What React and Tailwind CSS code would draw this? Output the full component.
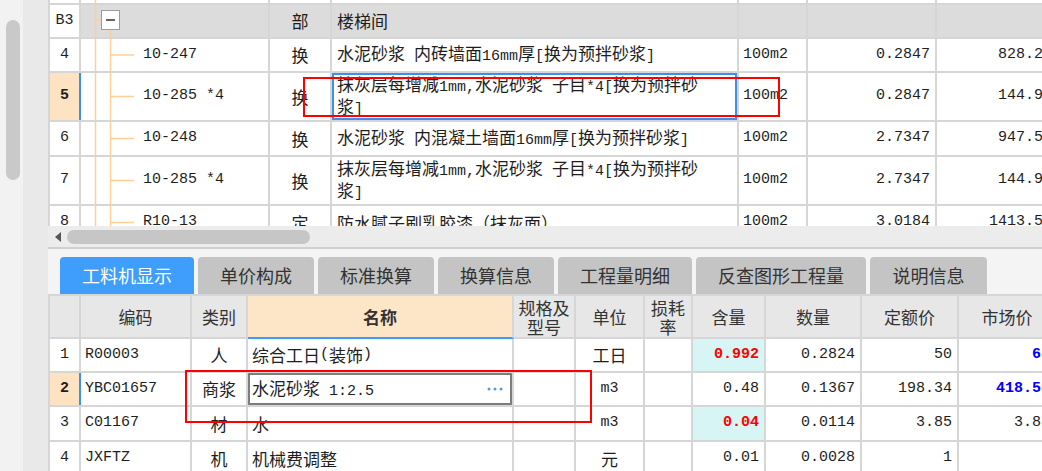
const G = "border-[#d6d6d6]";
const MONO = "font-['Liberation_Mono','Noto_Sans_CJK_SC',monospace] text-[15px]";

// ascii runs in a half-width mono face, CJK runs a bit bigger, like SimSun in the original
const Txt = ({ t }) =>
  String(t)
    .split(/([\x00-\x7f]+)/)
    .filter(Boolean)
    .map((p, i) =>
      /^[\x00-\x7f]+$/.test(p) ? (
        <span key={i} className="font-['Liberation_Mono',monospace] text-[15px]">
          {p}
        </span>
      ) : (
        <span key={i} className="font-['Noto_Sans_CJK_SC',sans-serif] text-[17px]">
          {p}
        </span>
      )
    );

const Tree = ({ h, kind }) => {
  const c = "#ffcf94";
  const mid = h / 2;
  return (
    <svg width="62" height={h} className="shrink-0">
      <line x1="14.5" y1="0" x2="14.5" y2={h} stroke={c} strokeWidth="1.5" />
      {kind === "group" && (
        <>
          <line x1="14.5" y1="15" x2="20" y2="15" stroke={c} strokeWidth="1.5" />
          <line x1="29.5" y1="25" x2="29.5" y2={h} stroke={c} strokeWidth="1.5" />
          <rect x="20.5" y="5.5" width="18" height="19" fill="#fff" stroke="#9c9c9c" />
          <line x1="25" y1="15" x2="34" y2="15" stroke="#333" strokeWidth="1.5" />
        </>
      )}
      {kind === "child" && (
        <>
          <line x1="29.5" y1="0" x2="29.5" y2={h} stroke={c} strokeWidth="1.5" />
          <line x1="29.5" y1={mid} x2="53" y2={mid} stroke={c} strokeWidth="1.5" />
        </>
      )}
    </svg>
  );
};

const topRows = [
  { h: "h-[5px]", sh: 3, no: "", kind: "top" },
  { h: "h-[34px]", sh: 32, no: "B3", kind: "group", type: "部", name: ["楼梯间"], group: true },
  { h: "h-[34px]", sh: 32, no: "4", kind: "child", code: "10-247", type: "换", name: ["水泥砂浆 内砖墙面16mm厚[换为预拌砂浆]"], unit: "100m2", qty: "0.2847", price: "828.26" },
  { h: "h-[49px]", sh: 47, no: "5", kind: "child", code: "10-285 *4", type: "换", name: ["抹灰层每增减1mm,水泥砂浆 子目*4[换为预拌砂", "浆]"], unit: "100m2", qty: "0.2847", price: "144.94", sel: true },
  { h: "h-[35px]", sh: 33, no: "6", kind: "child", code: "10-248", type: "换", name: ["水泥砂浆 内混凝土墙面16mm厚[换为预拌砂浆]"], unit: "100m2", qty: "2.7347", price: "947.55" },
  { h: "h-[49px]", sh: 47, no: "7", kind: "child", code: "10-285 *4", type: "换", name: ["抹灰层每增减1mm,水泥砂浆 子目*4[换为预拌砂", "浆]"], unit: "100m2", qty: "2.7347", price: "144.94" },
  { h: "h-[35px]", sh: 33, no: "8", kind: "child", code: "R10-13", type: "定", name: ["防水腻子刷乳胶漆（抹灰面）"], unit: "100m2", qty: "3.0184", price: "1413.56" },
];

const TopTable = () => (
  <div className={`h-[226px] shrink-0 overflow-hidden border-l-2 ${G} bg-white`}>
    {topRows.map((r, i) => (
      <div key={i} className={`flex ${r.h} shrink-0 border-b-2 ${G} ${r.group ? "bg-[#dcdcdc]" : "bg-white"}`}>
        <div
          className={`flex w-[31px] shrink-0 items-center justify-center border-r-2 ${MONO} ${
            r.sel ? "border-[#3d8ff0] bg-[#fde3c2] font-bold" : `${G} bg-white`
          }`}
        >
          {r.no}
        </div>
        <div className={`flex w-[189px] shrink-0 items-center overflow-hidden border-r-2 ${G} ${MONO}`}>
          <Tree h={r.sh} kind={r.kind} />
          <span className="whitespace-nowrap">{r.code}</span>
        </div>
        <div className={`flex w-[62px] shrink-0 items-center justify-center border-r-2 ${G}`}>
          {r.type && <Txt t={r.type} />}
        </div>
        <div
          className={`flex w-[407px] shrink-0 flex-col justify-center border-r-2 ${G} pl-[5px] leading-[18px] ${
            r.sel ? "shadow-[inset_0_0_0_2px_#3d8ff0]" : ""
          }`}
        >
          {(r.name || []).map((l, j) => (
            <div key={j} className="whitespace-nowrap">
              <Txt t={l} />
            </div>
          ))}
        </div>
        <div className={`flex w-[69px] shrink-0 items-center border-r-2 ${G} pl-[4px] ${MONO}`}>{r.unit}</div>
        <div className={`flex w-[129px] shrink-0 items-center justify-end border-r-2 ${G} pr-[5px] ${MONO}`}>{r.qty}</div>
        <div className={`flex w-[122px] shrink-0 items-center justify-end border-r-2 ${G} pr-[5px] ${MONO}`}>{r.price}</div>
      </div>
    ))}
  </div>
);

const tabs = [
  ["工料机显示", "w-[134px]"],
  ["单价构成", "w-[116px]"],
  ["标准换算", "w-[116px]"],
  ["换算信息", "w-[116px]"],
  ["工程量明细", "w-[134px]"],
  ["反查图形工程量", "w-[170px]"],
  ["说明信息", "w-[117px]"],
];

const BW = ["w-[31px]", "w-[111px]", "w-[56px]", "w-[266px]", "w-[62px]", "w-[69px]", "w-[48px]", "w-[73px]", "w-[96px]", "w-[97px]", "w-[98px]"];
const heads = ["", "编码", "类别", "名称", ["规格及", "型号"], "单位", ["损耗", "率"], "含量", "数量", "定额价", "市场价"];

const rows = [
  { h: "h-[34px]", n: "1", code: "R00003", type: "人", name: "综合工日(装饰)", unit: "工日", amt: "0.992", amtHi: true, qty: "0.2824", base: "50", mkt: "65", mktHi: true },
  { h: "h-[34px]", n: "2", sel: true, edit: true, code: "YBC01657", type: "商浆", name: "水泥砂浆 1:2.5", unit: "m3", amt: "0.48", qty: "0.1367", base: "198.34", mkt: "418.50", mktHi: true },
  { h: "h-[35px]", n: "3", code: "C01167", type: "材", name: "水", unit: "m3", amt: "0.04", amtHi: true, qty: "0.0114", base: "3.85", mkt: "3.85" },
  { h: "h-[35px]", n: "4", code: "JXFTZ", type: "机", name: "机械费调整", unit: "元", amt: "0.01", qty: "0.0028", base: "1", mkt: "" },
];

const BottomTable = () => (
  <div className={`border-l-2 border-t-2 ${G}`}>
    <div className="flex h-[43px]">
      {heads.map((h, i) => (
        <div
          key={i}
          className={`${BW[i]} flex shrink-0 flex-col items-center justify-center border-b-2 border-r-2 text-[17px] leading-[19px] text-[#333] ${
            i === 3 ? "border-b-[#3d9bfb] border-r-[#d6d6d6] bg-[#fde6c8] font-bold text-[#111]" : `${G} bg-[#e7e7e7]`
          }`}
        >
          {Array.isArray(h) ? h.map((l) => <div key={l}>{l}</div>) : h}
        </div>
      ))}
    </div>
    {rows.map((r) => (
      <div key={r.n} className={`flex ${r.h} shrink-0 border-b-2 ${G} bg-white`}>
        <div
          className={`${BW[0]} flex shrink-0 items-center justify-center border-r-2 ${MONO} ${
            r.sel ? "border-[#3d8ff0] bg-[#fde3c2] font-bold" : G
          }`}
        >
          {r.n}
        </div>
        <div className={`${BW[1]} flex shrink-0 items-center border-r-2 ${G} pl-[4px] ${MONO}`}>{r.code}</div>
        <div className={`${BW[2]} flex shrink-0 items-center justify-center border-r-2 ${G}`}>
          <Txt t={r.type} />
        </div>
        <div className={`${BW[3]} flex shrink-0 items-stretch border-r-2 ${G}`}>
          {r.edit ? (
            <div className="flex flex-1 items-center justify-between border-2 border-[#7d7d7d] pl-[2px] pr-[7px]">
              <span className="whitespace-nowrap">
                <Txt t={r.name} />
              </span>
              <svg width="16" height="4" viewBox="0 0 16 4">
                <circle cx="2" cy="2" r="1.5" fill="#5b9bd5" />
                <circle cx="8" cy="2" r="1.5" fill="#5b9bd5" />
                <circle cx="14" cy="2" r="1.5" fill="#5b9bd5" />
              </svg>
            </div>
          ) : (
            <div className="flex flex-1 items-center whitespace-nowrap pl-[4px]">
              <Txt t={r.name} />
            </div>
          )}
        </div>
        <div className={`${BW[4]} shrink-0 border-r-2 ${G}`} />
        <div className={`${BW[5]} flex shrink-0 items-center justify-center border-r-2 ${G}`}>
          <Txt t={r.unit} />
        </div>
        <div className={`${BW[6]} shrink-0 border-r-2 ${G}`} />
        <div
          className={`${BW[7]} flex shrink-0 items-center justify-end border-r-2 ${G} pr-[5px] ${MONO} ${
            r.amtHi ? "bg-[#d8f5f5] font-bold text-[#ff0000]" : ""
          }`}
        >
          {r.amt}
        </div>
        <div className={`${BW[8]} flex shrink-0 items-center justify-end border-r-2 ${G} pr-[5px] ${MONO}`}>{r.qty}</div>
        <div className={`${BW[9]} flex shrink-0 items-center justify-end border-r-2 ${G} pr-[5px] ${MONO}`}>{r.base}</div>
        <div
          className={`${BW[10]} flex shrink-0 items-center justify-end border-r-2 ${G} pr-[5px] ${MONO} ${
            r.mktHi ? "font-bold text-[#0000ff]" : ""
          }`}
        >
          {r.mkt}
        </div>
      </div>
    ))}
  </div>
);

export default function App() {
  return (
    <div className="relative flex h-[471px] w-[1042px] overflow-hidden bg-[#f2f2f2] font-['Noto_Sans_CJK_SC',sans-serif] text-[#1e1e1e]">
      <div className="w-[23px] shrink-0 pl-[6px] pt-[20px]">
        <div className="h-[160px] w-[14px] rounded-full bg-[#c9c9c9]" />
      </div>
      <div className="w-[25px] shrink-0 bg-[#e9e9e9]" />

      <div className="flex min-w-0 flex-1 flex-col">
        <TopTable />

        {/* horizontal scrollbar */}
        <div className="flex h-[21px] shrink-0 items-center gap-[6px] bg-[#ececec] pl-[7px]">
          <svg width="6" height="10" viewBox="0 0 6 10">
            <path d="M6 0 L0 5 L6 10 Z" fill="#555" />
          </svg>
          <div className="h-[14px] w-[243px] rounded-full bg-[#c6c6c6]" />
        </div>
        <div className="h-[2px] shrink-0 bg-[#d0d0d0]" />

        <div className="flex-1 bg-[#f4f4f4] pt-[8px]">
          <div className="flex gap-[4px] pl-[12px]">
            {tabs.map(([t, w], i) => (
              <div
                key={t}
                className={`${w} flex h-[37px] shrink-0 items-center justify-center rounded-t-[4px] text-[18px] ${
                  i === 0 ? "bg-[#3f9dfc] text-white" : "bg-[#c4c4c4] text-[#333]"
                }`}
              >
                {t}
              </div>
            ))}
          </div>
          <BottomTable />
        </div>
      </div>

      {/* red markup boxes */}
      <div className="pointer-events-none absolute left-[303px] top-[77px] h-[40px] w-[477px] border-2 border-[#ff0000]" />
      <div className="pointer-events-none absolute left-[185px] top-[370px] h-[53px] w-[407px] border-2 border-[#ff0000]" />
    </div>
  );
}
